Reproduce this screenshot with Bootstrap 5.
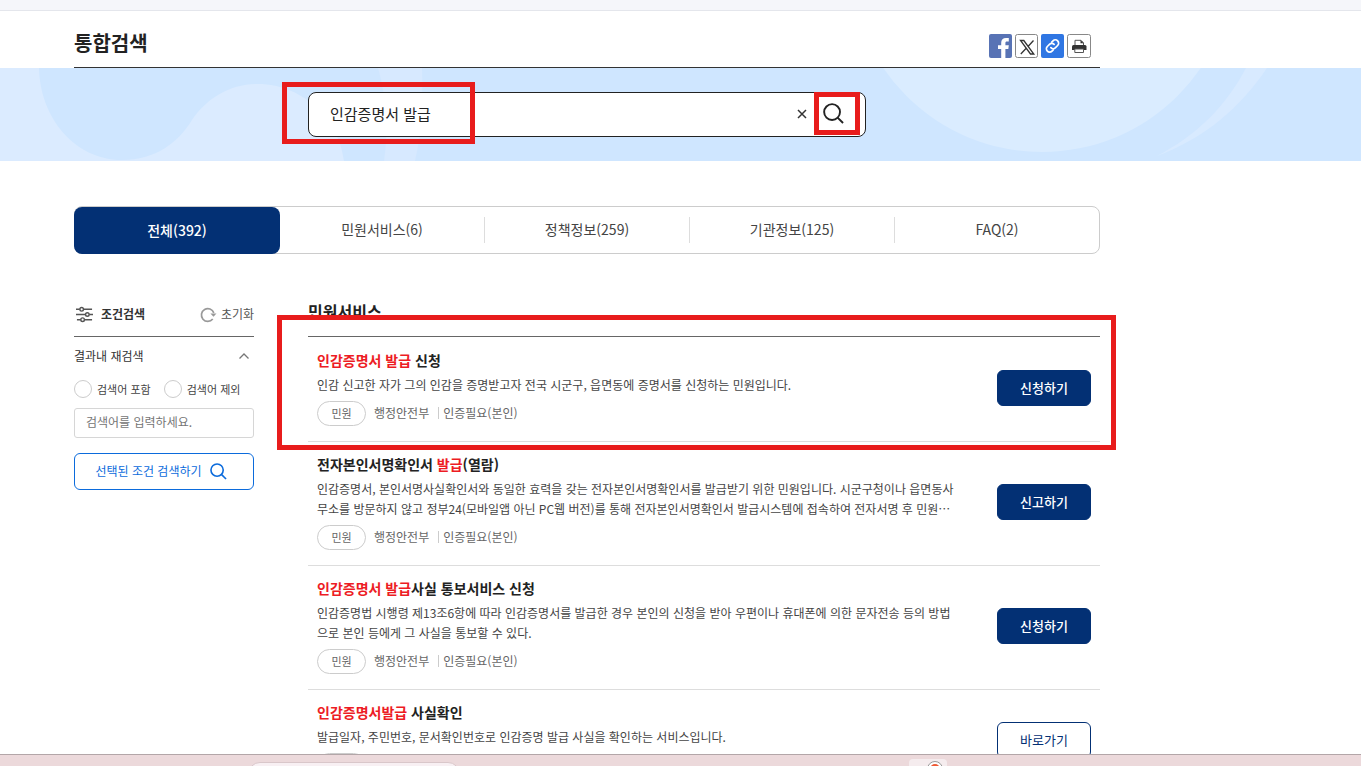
<!DOCTYPE html>
<html lang="ko">
<head>
<meta charset="utf-8">
<meta name="viewport" content="width=device-width, initial-scale=1">
<title>통합검색</title>
<link href="https://cdn.jsdelivr.net/npm/bootstrap@5.3.0/dist/css/bootstrap.min.css" rel="stylesheet">
<style>
:root{--navy:#033074;--ink:#222;--hit:#ed1c24;--note:#e81c1c}
body{font-family:"Noto Sans CJK KR",sans-serif;color:var(--ink);font-size:12px;line-height:20px;background:#fff}
.page-wrap{max-width:1026px;margin-left:74px}
.top-strip{height:11px;background:#f5f6fa;border-bottom:1px solid #e4e6ec}
.page-head{height:57px;border-bottom:1px solid #333}
.page-title{font-size:20px;line-height:28px;font-weight:700;padding-top:12px;padding-bottom:5px}
.share{gap:3px;padding:14px 9px 0 0}
.share svg,.btn svg,.hero svg,.tool-icon,.dock svg{display:block}
.hero{height:93px;background:#cfe6ff;padding-top:24px}
.hero-art{inset:0;width:100%;height:100%}
.search-box{margin-left:234px;max-width:558px;height:45px;border:1px solid #222;border-radius:8px;background:#fff;padding-left:21px;padding-right:21px;padding-bottom:2px}
.search-box input{border:0;font-size:15px;line-height:22px;color:#222;outline:0;background:none}
.note-frame{border:5px solid var(--note);pointer-events:none;z-index:3}
.note-word{left:-27px;top:-11px;width:193px;height:62px}
.note-go{right:5px;top:-1px;width:46px;height:43px}
.note-item{left:-31px;right:-16px;top:-22px;height:135px}
.tabs{margin-top:45px;border:1px solid #ccc;border-radius:8px;height:48px}
.tabs a{flex:1 1 0;font-size:14px;color:#444;text-decoration:none;height:26px;padding-bottom:2px;border-left:1px solid #ddd}
.tabs a.on{flex-basis:2px;height:47px;margin:0 0 -1px -1px;background:var(--navy);color:#fff;border-radius:8px;border:0;font-weight:500}
.tabs a.on + a{border-left:0}
.columns{gap:54px;margin-top:46px}
.filters{width:180px}
.filters-head{height:37px;border-bottom:1px solid #666;padding:0 0 8px 2px}
.filters-head strong{color:#333;font-weight:700}
.plain{border:0;background:none;padding:0;color:#555}
.fold{height:38px;color:#333}
.picks{gap:13px}
.pick{font-size:11px;color:#444;gap:5px}
.pick input{appearance:none;width:18px;height:18px;border:1px solid #ccc;border-radius:50%;margin:0;background:#fff}
.pick input:checked{border:5px solid #0b6bdc}
.refine{height:30px;border:1px solid #d6d6d6;border-radius:3px;font-size:12px;padding:0 11px 3px;margin-top:9px}
.refine::placeholder{color:#757575;opacity:1}
.btn-refine{height:37px;border:1px solid #0b6bdc;border-radius:6px;color:#0b6bdc;font-size:12px;margin-top:15px;padding:0 6px 1px 0}
.results{min-width:0}
.results-head{height:37px;border-bottom:1px solid #666;font-size:16px;line-height:24px;font-weight:700;padding-bottom:14px}
.hit{border-bottom:1px solid #ddd;padding:11px 9px 15px}
.hit:first-of-type{padding-top:12px}
.hit h3{font-size:14px;line-height:22px;font-weight:700;margin:0 0 4px}
.hit h3 em{font-style:normal;color:var(--hit)}
.hit p{color:#444;margin:0 0 6px}
.kind{width:49px;height:25px;border:1px solid #ccc;border-radius:13px;font-size:11px;color:#666;padding-bottom:2px}
.meta{color:#666}
.meta .who{margin:0 9px 0 8px;padding-bottom:2px}
.meta .auth{border-left:1px solid #ccc;padding-left:4px;line-height:12px;margin-bottom:2px}
.btn-act{width:94px;height:36px;border-radius:6px;font-size:13px;font-weight:500;padding:0;background:var(--navy);color:#fff;border:1px solid var(--navy)}
.btn-act.line{background:#fff;color:var(--navy);font-weight:400}
.dock{height:12px;background:#ecd9db;border-top:1px solid #b3a6a8}
.dock-field{width:212px;height:24px;margin:7px 0 0 248px;background:#f8f0f3;border:1px solid #d9c7ca;border-radius:12px}
.dock-tile{width:38px;height:30px;margin:4px 0 0 449px;background:#f5ecee;border-radius:4px}
</style>
</head>
<body>
<div class="vh-100 d-flex flex-column overflow-hidden">
<main class="flex-grow-1 overflow-hidden">
  <div class="top-strip"></div>
  <header class="page-wrap page-head d-flex align-items-center justify-content-between">
    <h1 class="page-title m-0">통합검색</h1>
    <div class="share d-flex">
      <a href="#" aria-label="페이스북"><svg width="23" height="24" viewBox="0 0 23 24"><rect width="23" height="24" rx="2" fill="#5873b5"/><path d="M12.200 24V15H9v-3.700h3.200V8.800C12.200 5.600 14 4 17 4h2.800v3.400H18c-1.300 0-1.600.6-1.600 1.600v2.300h3.400l-.5 3.700h-2.900V24z" fill="#fff"/></svg></a>
      <a href="#" aria-label="X"><svg width="23" height="24" viewBox="0 0 23 24"><rect x=".5" y=".5" width="22" height="23" rx="2" fill="#fff" stroke="#888"/><path d="M5.500 6.500h3.300l10 13.500h-3.300zM18.500 6.500l-5.500 6M11.200 14.200L5.800 20" fill="none" stroke="#333" stroke-width="1.300"/></svg></a>
      <a href="#" aria-label="링크 복사"><svg width="23" height="24" viewBox="0 0 23 24"><rect width="23" height="24" rx="2" fill="#2f76e3"/><g transform="rotate(-45 11.500 12)" fill="none" stroke="#fff" stroke-width="1.700" stroke-linecap="round"><path d="M9.300 15.300H7.500a3.300 3.300 0 0 1 0-6.600h3a3.300 3.300 0 0 1 3.300 3.300"/><path d="M13.700 8.700h1.800a3.300 3.300 0 0 1 0 6.600h-3A3.300 3.300 0 0 1 9.200 12"/></g></svg></a>
      <a href="#" aria-label="인쇄"><svg width="24" height="24" viewBox="0 0 24 24"><rect x=".5" y=".5" width="23" height="23" rx="2" fill="#fff" stroke="#888"/><path d="M8 11V6.300h6l2.500 2.500V11" fill="#fff" stroke="#555"/><path d="M13.500 6v3.300h3.200z" fill="#333"/><path d="M5 12.500q0-1.500 1.500-1.500h11.500q1.500 0 1.500 1.500V16H5z" fill="#333"/><path d="M7.800 15h8.700v3.500H7.800z" fill="#fff" stroke="#555"/></svg></a>
    </div>
  </header>

  <section class="hero position-relative">
    <svg class="hero-art position-absolute" viewBox="0 0 1361 93" preserveAspectRatio="none" aria-hidden="true">
      <path d="M0 0H39C40 50 75 92 122 92C155 92 178 75 192 52C207 30 230 16 258 16C305 16 340 55 344 93H0z" fill="#dbebff"/>
      <path d="M378 0H422Q424 55 415 93H384Q391 45 378 0z" fill="#d7e9ff"/>
      <circle cx="1042" cy="-108" r="192" fill="#daecff"/>
      <path d="M1246 0C1225 40 1195 68 1157 88C1205 70 1240 40 1267 0z" fill="#d8eaff"/>
    </svg>
    <div class="page-wrap">
      <form class="search-box position-relative d-flex align-items-center">
        <input class="flex-grow-1 p-0" type="text" value="인감증명서 발급" aria-label="검색어">
        <button class="plain me-3" type="button" aria-label="지우기"><svg width="10" height="10" viewBox="0 0 10 10"><path d="M1 1l8 8M9 1L1 9" stroke="#333" stroke-width="1.500"/></svg></button>
        <button class="plain" type="button" aria-label="검색"><svg width="21" height="21" viewBox="0 0 22 22" fill="none" stroke="#222" stroke-width="2"><circle cx="9.500" cy="9.500" r="8.300"/><path d="M15.300 15.300L21 21"/></svg></button>
        <div class="note-frame note-word position-absolute"></div>
        <div class="note-frame note-go position-absolute"></div>
      </form>
    </div>
  </section>

  <div class="page-wrap">
    <nav class="tabs d-flex align-items-center text-center" aria-label="검색 분류">
      <a href="#" class="on d-flex align-items-center justify-content-center">전체(392)</a>
      <a href="#" class="d-flex align-items-center justify-content-center">민원서비스(6)</a>
      <a href="#" class="d-flex align-items-center justify-content-center">정책정보(259)</a>
      <a href="#" class="d-flex align-items-center justify-content-center">기관정보(125)</a>
      <a href="#" class="d-flex align-items-center justify-content-center">FAQ(2)</a>
    </nav>

    <div class="columns d-flex">
      <aside class="filters flex-shrink-0">
        <div class="filters-head d-flex align-items-center justify-content-between">
          <span class="d-flex align-items-center gap-2">
            <svg class="tool-icon" width="17" height="17" viewBox="0 0 18 18" fill="none" stroke="#555" stroke-width="1.500"><path d="M0 3.500h4M8 3.500h9M0 9h10M14 9h4M1 14.500h4M9 14.500h8"/><circle cx="6" cy="3.500" r="1.900"/><circle cx="12" cy="9" r="1.900"/><circle cx="7" cy="14.500" r="1.900"/></svg>
            <strong>조건검색</strong>
          </span>
          <button type="button" class="plain d-flex align-items-center gap-1"><svg class="tool-icon" width="17" height="17" viewBox="0 0 16 16"><path d="M12 12.300A6 6 0 1 1 13 6.500" fill="none" stroke="#999" stroke-width="1.600"/><path d="M9.800 7h5.700l-2.800 3.200z" fill="#999"/></svg>초기화</button>
        </div>
        <button type="button" class="plain fold w-100 d-flex align-items-center justify-content-between pe-1"><span>결과내 재검색</span><svg class="tool-icon" width="12" height="8" viewBox="0 0 12 8"><path d="M1.500 6.500L6 2l4.500 4.500" fill="none" stroke="#777" stroke-width="1.300"/></svg></button>
        <div class="picks d-flex pt-1">
          <label class="pick d-flex align-items-center"><input type="radio" name="scope">검색어 포함</label>
          <label class="pick d-flex align-items-center"><input type="radio" name="scope">검색어 제외</label>
        </div>
        <input class="refine w-100 d-block" type="text" placeholder="검색어를 입력하세요." aria-label="결과내 검색어">
        <button type="button" class="btn btn-refine w-100 d-flex align-items-center justify-content-center gap-2">선택된 조건 검색하기<svg width="17" height="17" viewBox="0 0 18 18" fill="none" stroke="#0b6bdc" stroke-width="1.700"><circle cx="7.500" cy="7.500" r="6.500"/><path d="M12.300 12.300L17 17"/></svg></button>
      </aside>

      <section class="results flex-grow-1">
        <h2 class="results-head m-0 d-flex align-items-center">민원서비스</h2>
        <article class="hit position-relative d-flex align-items-center justify-content-between">
          <div>
            <h3><em>인감증명서 발급</em> 신청</h3>
            <p>인감 신고한 자가 그의 인감을 증명받고자 전국 시군구, 읍면동에 증명서를 신청하는 민원입니다.</p>
            <div class="meta d-flex align-items-center"><span class="kind d-flex align-items-center justify-content-center">민원</span><span class="who">행정안전부</span><span class="auth">인증필요(본인)</span></div>
          </div>
          <button type="button" class="btn btn-act flex-shrink-0">신청하기</button>
          <div class="note-frame note-item position-absolute"></div>
        </article>
        <article class="hit d-flex align-items-center justify-content-between">
          <div>
            <h3>전자본인서명확인서 <em>발급</em>(열람)</h3>
            <p>인감증명서, 본인서명사실확인서와 동일한 효력을 갖는 전자본인서명확인서를 발급받기 위한 민원입니다. 시군구청이나 읍면동사<br>무소를 방문하지 않고 정부24(모바일앱 아닌 PC웹 버전)를 통해 전자본인서명확인서 발급시스템에 접속하여 전자서명 후 민원…</p>
            <div class="meta d-flex align-items-center"><span class="kind d-flex align-items-center justify-content-center">민원</span><span class="who">행정안전부</span><span class="auth">인증필요(본인)</span></div>
          </div>
          <button type="button" class="btn btn-act flex-shrink-0">신고하기</button>
        </article>
        <article class="hit d-flex align-items-center justify-content-between">
          <div>
            <h3><em>인감증명서 발급</em>사실 통보서비스 신청</h3>
            <p>인감증명법 시행령 제13조6항에 따라 인감증명서를 발급한 경우 본인의 신청을 받아 우편이나 휴대폰에 의한 문자전송 등의 방법<br>으로 본인 등에게 그 사실을 통보할 수 있다.</p>
            <div class="meta d-flex align-items-center"><span class="kind d-flex align-items-center justify-content-center">민원</span><span class="who">행정안전부</span><span class="auth">인증필요(본인)</span></div>
          </div>
          <button type="button" class="btn btn-act flex-shrink-0">신청하기</button>
        </article>
        <article class="hit d-flex align-items-center justify-content-between">
          <div>
            <h3><em>인감증명서발급</em> 사실확인</h3>
            <p>발급일자, 주민번호, 문서확인번호로 인감증명 발급 사실을 확인하는 서비스입니다.</p>
            <div class="meta d-flex align-items-center"><span class="kind d-flex"></span></div>
          </div>
          <button type="button" class="btn btn-act line flex-shrink-0">바로가기</button>
        </article>
      </section>
    </div>
  </div>
</main>
<footer class="dock d-flex flex-shrink-0 overflow-hidden">
  <div class="dock-field flex-shrink-0"></div>
  <div class="dock-tile flex-shrink-0 d-flex justify-content-end pe-1"><svg width="16" height="20" viewBox="0 0 16 20"><circle cx="8" cy="10" r="7.500" fill="#fff" stroke="#999"/><circle cx="8" cy="10" r="5" fill="#ee5a36"/></svg></div>
</footer>
</div>
<script src="https://cdn.jsdelivr.net/npm/bootstrap@5.3.0/dist/js/bootstrap.bundle.min.js"></script>
</body>
</html>
